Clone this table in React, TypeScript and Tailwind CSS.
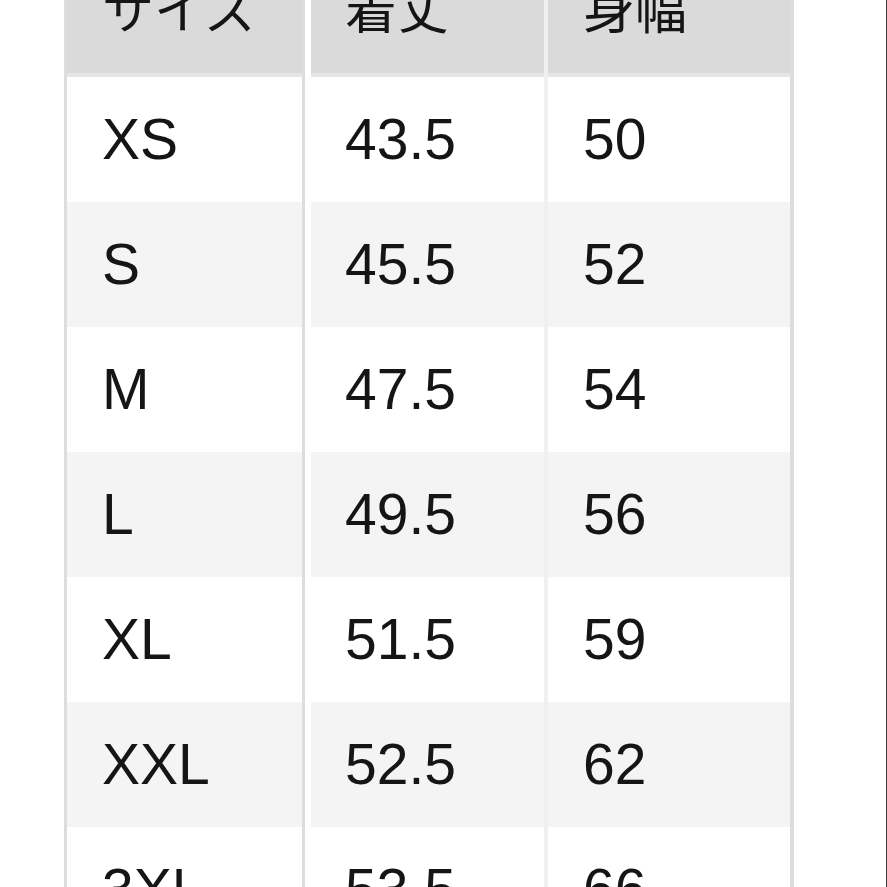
import React from "react";

const rows: [string, string, string][] = [
  ["XS", "43.5", "50"],
  ["S", "45.5", "52"],
  ["M", "47.5", "54"],
  ["L", "49.5", "56"],
  ["XL", "51.5", "59"],
  ["XXL", "52.5", "62"],
  ["3XL", "53.5", "66"],
];

function Row({ cells, header, shade }: { cells: string[]; header?: boolean; shade?: boolean }) {
  const bg = header ? "bg-[#dadada]" : shade ? "bg-[#f4f4f4]" : "bg-white";
  const h = header ? "h-[129px] border-b-[4px] border-b-[#e6e6e6] pb-[8px]" : "h-[125px]";
  const text = header
    ? "text-[52px] [font-family:'Noto_Sans_CJK_JP','Liberation_Sans',sans-serif]"
    : "text-[57px] [font-family:'Liberation_Sans',Arial,sans-serif]";
  return (
    <div className="flex">
      <div className="flex border-l-[3px] border-r-[3px] border-l-[#dddddd] border-r-[#dddddd]">
        <div className={`w-[235px] ${h} ${bg} flex items-center pl-[35px] ${text} leading-none text-[#151515]`}>
          {cells[0]}
        </div>
      </div>
      <div className="w-[6px] bg-white" />
      <div className={`w-[233px] ${h} ${bg} flex items-center pl-[34px] ${text} leading-none text-[#151515]`}>
        {cells[1]}
      </div>
      <div className="w-[4px] bg-[#f0f0f0]" />
      <div className="flex border-r-[4px] border-r-[#dddddd]">
        <div className={`w-[242px] ${h} ${bg} flex items-center pl-[35px] ${text} leading-none text-[#151515]`}>
          {cells[2]}
        </div>
      </div>
    </div>
  );
}

export default function App() {
  return (
    <div className="w-[887px] h-[887px] overflow-hidden bg-white border-r border-r-[#3a3a3a]">
      <div className="ml-[64px] -mt-[52px] flex flex-col">
        <Row header cells={["サイズ", "着丈", "身幅"]} />
        {rows.map((r, i) => (
          <Row key={r[0]} cells={r} shade={i % 2 === 1} />
        ))}
      </div>
    </div>
  );
}
